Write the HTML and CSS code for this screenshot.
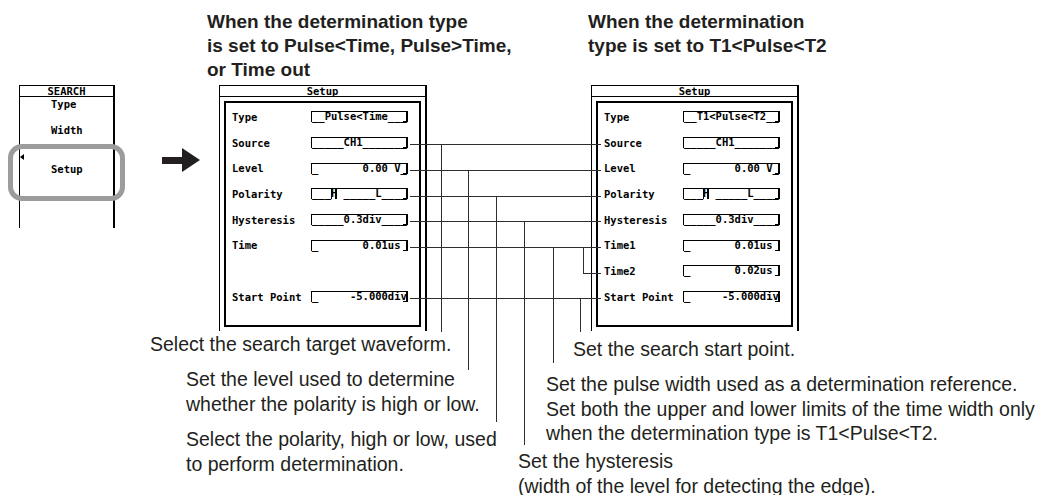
FILE: index.html
```html
<!DOCTYPE html>
<html lang="en">
<head>
<meta charset="utf-8">
<title>SEARCH Setup</title>
<link rel="stylesheet" href="styles.css">
</head>
<body>
<div class="page">
  <div class="heads">
    <h2 class="head head-left">When the determination type<br>is set to Pulse&lt;Time, Pulse&gt;Time,<br>or Time out</h2>
    <h2 class="head head-right">When the determination<br>type is set to T1&lt;Pulse&lt;T2</h2>
  </div>

  <div class="stage">
    <div class="menu">
      <div class="menu-title">SEARCH</div>
      <div class="menu-item">Type</div>
      <div class="menu-item menu-value">Width</div>
      <div class="menu-item menu-btn">Setup</div>
      <span class="tri"></span>
      <div class="focus-ring"></div>
    </div>

    <svg class="arrow" viewBox="0 0 38 24" aria-hidden="true">
      <polygon points="0,9 20,9 20,0 38,12 20,24 20,16 0,16" fill="#231f20"/>
    </svg>

    <div class="dialog">
      <div class="dialog-title">Setup</div>
      <div class="panel">
        <div class="row"><span class="label">Type</span><span class="val">__Pulse&lt;Time___</span></div>
        <div class="row"><span class="label">Source</span><span class="val">_____CH1_______</span></div>
        <div class="row"><span class="label">Level</span><span class="val">_       0.00 V_</span></div>
        <div class="row"><span class="label">Polarity</span><span class="val">___<span class="sel">H</span> _____L____</span></div>
        <div class="row"><span class="label">Hysteresis</span><span class="val">_____0.3div____</span></div>
        <div class="row"><span class="label">Time</span><span class="val">_       0.01us </span></div>
        <div class="row"></div>
        <div class="row"><span class="label">Start Point</span><span class="val">_     -5.000div</span></div>
      </div>
    </div>

    <div class="dialog">
      <div class="dialog-title">Setup</div>
      <div class="panel">
        <div class="row"><span class="label">Type</span><span class="val">__T1&lt;Pulse&lt;T2__</span></div>
        <div class="row"><span class="label">Source</span><span class="val">_____CH1_______</span></div>
        <div class="row"><span class="label">Level</span><span class="val">_       0.00 V_</span></div>
        <div class="row"><span class="label">Polarity</span><span class="val">___<span class="sel">H</span> _____L____</span></div>
        <div class="row"><span class="label">Hysteresis</span><span class="val">_____0.3div____</span></div>
        <div class="row"><span class="label">Time1</span><span class="val">_       0.01us </span></div>
        <div class="row"><span class="label">Time2</span><span class="val">_       0.02us </span></div>
        <div class="row"><span class="label">Start Point</span><span class="val">_     -5.000div</span></div>
      </div>
    </div>
  </div>

  <svg class="leaders" viewBox="0 0 1039 495" aria-hidden="true">
    <g stroke="#2e2e2e" stroke-width="1" fill="none" shape-rendering="crispEdges">
      <line x1="410" y1="144.5" x2="601" y2="144.5"/>
      <line x1="410" y1="170.5" x2="601" y2="170.5"/>
      <line x1="410" y1="196.5" x2="601" y2="196.5"/>
      <line x1="410" y1="221.5" x2="601" y2="221.5"/>
      <line x1="410" y1="247.5" x2="601" y2="247.5"/>
      <line x1="410" y1="298.5" x2="601" y2="298.5"/>
      <polyline points="583.5,247.5 583.5,273.5 601,273.5"/>
      <line x1="441.5" y1="144.5" x2="441.5" y2="332"/>
      <line x1="468.5" y1="170.5" x2="468.5" y2="370"/>
      <line x1="496.5" y1="196.5" x2="496.5" y2="422"/>
      <line x1="524.5" y1="221.5" x2="524.5" y2="445"/>
      <line x1="553.5" y1="247.5" x2="553.5" y2="363"/>
      <line x1="580.5" y1="298.5" x2="580.5" y2="332"/>
    </g>
  </svg>

  <p class="note n-source">Select the search target waveform.</p>
  <p class="note n-level">Set the level used to determine<br>whether the polarity is high or low.</p>
  <p class="note n-polarity">Select the polarity, high or low, used<br>to perform determination.</p>
  <p class="note n-start">Set the search start point.</p>
  <p class="note n-time">Set the pulse width used as a determination reference.<br>Set both the upper and lower limits of the time width only<br>when the determination type is T1&lt;Pulse&lt;T2.</p>
  <p class="note n-hyst">Set the hysteresis<br>(width of the level for detecting the edge).</p>
</div>
</body>
</html>
```

FILE: styles.css
```css
body {
  margin: 0;
  background: #fff;
}

.page {
  position: relative;
  width: 1039px;
  height: 495px;
  overflow: hidden;
  font-family: "Liberation Sans", Arial, sans-serif;
  color: #231f20;
}

/* Headings */
.heads {
  display: flex;
  height: 85px;
  box-sizing: border-box;
  padding: 10px 0 0 207px;
}

.head {
  margin: 0;
  font: bold 19px/24px "Liberation Sans", Arial, sans-serif;
  white-space: nowrap;
}

.head-left {
  width: 381px;
  flex: none;
}

/* Screen row */
.stage {
  display: flex;
  align-items: flex-start;
  padding-left: 19px;
  height: 246px;
}

.menu,
.dialog {
  font: bold 10.5px "DejaVu Sans Mono", "Liberation Mono", monospace;
  color: #000;
}

.menu {
  position: relative;
  flex: none;
  width: 96px;
  height: 143px;
  box-sizing: border-box;
  border-left: 1px solid #000;
  border-right: 2px solid #000;
  display: flex;
  flex-direction: column;
}

.menu-title {
  height: 12px;
  box-sizing: border-box;
  border-top: 1px solid #000;
  border-bottom: 1px solid #000;
  text-align: center;
  line-height: 10px;
}

.menu-item {
  padding-left: 31px;
  height: 14px;
  line-height: 14px;
}

.menu-value {
  margin-top: 12px;
}

.menu-btn {
  margin-top: 8px;
  height: 52px;
  box-sizing: border-box;
  padding-top: 17px;
  border-bottom: 1px solid #000;
}

.tri {
  position: absolute;
  left: 0;
  top: 69px;
  width: 0;
  height: 0;
  border-right: 4px solid #000;
  border-top: 3px solid transparent;
  border-bottom: 3px solid transparent;
}

.focus-ring {
  position: absolute;
  left: -12px;
  top: 59px;
  width: 117px;
  height: 57px;
  box-sizing: border-box;
  border: 5px solid #9c9c9c;
  border-radius: 14px;
}

.arrow {
  flex: none;
  width: 38px;
  height: 24px;
  margin: 63px 0 0 47px;
}

/* Setup dialogs */
.dialog {
  flex: none;
  width: 208px;
  height: 246px;
  margin-left: 19px;
  box-sizing: border-box;
  border-top: 1px solid #000;
  border-left: 1px solid #000;
  border-right: 2px solid #000;
  display: flex;
  flex-direction: column;
}

.dialog + .dialog {
  margin-left: 164px;
}

.dialog-title {
  height: 11px;
  box-sizing: border-box;
  border-bottom: 1px solid #000;
  text-align: center;
  line-height: 10px;
}

.panel {
  margin: 4px 4px 0;
  height: 226px;
  box-sizing: border-box;
  border: 2px solid #000;
  padding: 1px 0 0 6px;
}

.row {
  display: flex;
  align-items: center;
  height: 25.7px;
}

.label {
  flex: none;
  width: 79px;
  white-space: pre;
}

.val {
  position: relative;
  flex: none;
  width: 97px;
  height: 11px;
  box-sizing: border-box;
  border-top: 1px solid #000;
  border-left: 1px solid #000;
  border-right: 2px solid #000;
  white-space: pre;
  line-height: 8px;
}

.val::after {
  content: "";
  position: absolute;
  right: 0;
  bottom: 0;
  width: 3px;
  height: 1px;
  background: #000;
}

.sel {
  display: inline-block;
  height: 10px;
  box-shadow: inset 1px 0 #000, inset -2px 0 #000;
}

/* Leader lines and call-outs */
.leaders {
  position: absolute;
  left: 0;
  top: 0;
  width: 1039px;
  height: 495px;
  pointer-events: none;
}

.note {
  position: absolute;
  margin: 0;
  font-size: 19.5px;
  line-height: 24.5px;
  white-space: nowrap;
}

.n-source { left: 150px; top: 332px; }
.n-level { left: 186px; top: 367px; }
.n-polarity { left: 186px; top: 427px; }
.n-start { left: 573px; top: 337px; }
.n-time { left: 546px; top: 372px; }
.n-hyst { left: 518px; top: 449px; }
```
